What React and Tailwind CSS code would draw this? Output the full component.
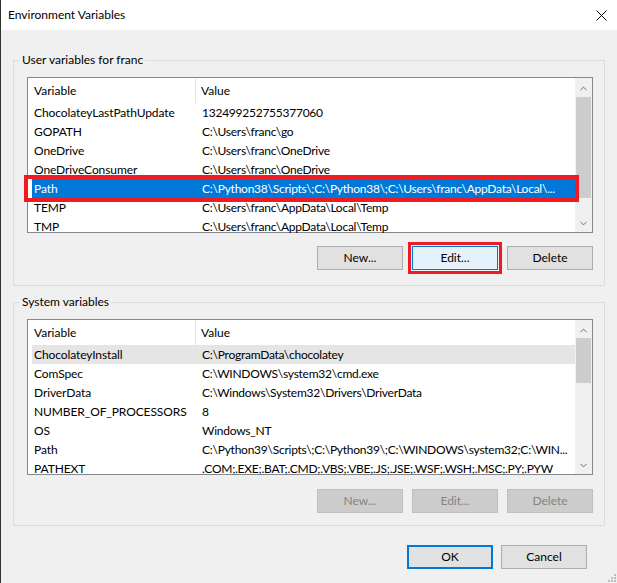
import { ChevronUp, ChevronDown } from 'lucide-react';

const userVars = [
  ['ChocolateyLastPathUpdate', '132499252755377060'],
  ['GOPATH', 'C:\\Users\\franc\\go'],
  ['OneDrive', 'C:\\Users\\franc\\OneDrive'],
  ['OneDriveConsumer', 'C:\\Users\\franc\\OneDrive'],
  ['Path', 'C:\\Python38\\Scripts\\;C:\\Python38\\;C:\\Users\\franc\\AppData\\Local\\...'],
  ['TEMP', 'C:\\Users\\franc\\AppData\\Local\\Temp'],
  ['TMP', 'C:\\Users\\franc\\AppData\\Local\\Temp'],
];

const sysVars = [
  ['ChocolateyInstall', 'C:\\ProgramData\\chocolatey'],
  ['ComSpec', 'C:\\WINDOWS\\system32\\cmd.exe'],
  ['DriverData', 'C:\\Windows\\System32\\Drivers\\DriverData'],
  ['NUMBER_OF_PROCESSORS', '8'],
  ['OS', 'Windows_NT'],
  ['Path', 'C:\\Python39\\Scripts\\;C:\\Python39\\;C:\\WINDOWS\\system32;C:\\WIN...'],
  ['PATHEXT', '.COM;.EXE;.BAT;.CMD;.VBS;.VBE;.JS;.JSE;.WSF;.WSH;.MSC;.PY;.PYW'],
];

const Row = ({ name, value, selected, hover, marked }) => (
  <div
    className={`relative h-[19px] ml-[4px] flex items-center shrink-0 min-w-0 ${
      selected ? 'bg-[#0078d7] text-white' : hover ? 'bg-[#e5e5e5]' : ''
    }`}
  >
    <div className="w-[170px] shrink-0 pl-[2px] whitespace-nowrap overflow-hidden tracking-[-0.1px]">{name}</div>
    <div className="flex-1 min-w-0 whitespace-nowrap overflow-hidden tracking-[-0.25px]">{value}</div>
    {marked && (
      <div className="absolute -left-[8px] -right-[4px] -top-[4px] -bottom-[4px] border-4 border-[#ed1c24]" />
    )}
  </div>
);

const Scrollbar = ({ thumbTop, thumbH }) => (
  <div className="w-[17px] shrink-0 bg-[#f0f0f0] flex flex-col">
    <div className="h-[17px] flex items-center justify-center pt-[3px] text-[#606060]">
      <ChevronUp size={11} strokeWidth={2} />
    </div>
    <div className="flex-1">
      <div className={`mx-[1px] bg-[#cdcdcd] ${thumbTop} ${thumbH}`} />
    </div>
    <div className="h-[17px] flex items-center justify-center text-[#606060]">
      <ChevronDown size={11} strokeWidth={2} />
    </div>
  </div>
);

const VarList = ({ rows, selectedIdx, hoverIdx, thumbTop, thumbH }) => (
  <div className="h-[156px] border border-[#828790] bg-white flex min-w-0">
    <div className="flex-1 min-w-0 flex flex-col">
      <div className="h-[25px] flex items-center shrink-0">
        <div className="w-[168px] h-full pl-[6px] flex items-center border-r border-[#e5e5e5]">Variable</div>
        <div className="pl-[5px]">Value</div>
      </div>
      {rows.map(([n, v], i) => (
        <Row
          key={n}
          name={n}
          value={v}
          selected={i === selectedIdx}
          hover={i === hoverIdx}
          marked={i === selectedIdx}
        />
      ))}
    </div>
    <Scrollbar thumbTop={thumbTop} thumbH={thumbH} />
  </div>
);

const Btn = ({ children, variant = 'normal', marked }) => {
  const styles = {
    normal: 'bg-[#e1e1e1] border border-[#adadad] text-black',
    focus: 'bg-[#e5f1fb] border border-[#0078d7] text-black',
    disabled: 'bg-[#cccccc] border border-[#bfbfbf] text-[#838383]',
    default: 'bg-[#e1e1e1] border-2 border-[#0078d7] text-black',
  };
  return (
    <div
      className={`w-[86px] h-[24px] flex items-center justify-center ${styles[variant]} ${
        marked ? 'outline-[3px] outline-solid outline-offset-[1px] outline-[#ed1c24]' : ''
      }`}
    >
      {children}
    </div>
  );
};

const Group = ({ label, children, pb }) => (
  <fieldset className={`min-w-0 border border-[#dcdcdc] ${pb}`}>
    <legend className="ml-[6px] px-[2px] leading-[16px]">{label}</legend>
    <div className="pl-[13px] pr-[11px] pt-[9px]">{children}</div>
  </fieldset>
);

export default function App() {
  return (
    <div
      className="relative w-[617px] h-[583px] bg-[#f0f0f0] border-l border-[#2e332b] flex flex-col text-[12px] text-black overflow-hidden"
      style={{ fontFamily: 'Lato, "Liberation Sans", Arial, sans-serif' }}
    >
      {/* Title bar */}
      <div className="h-[30px] bg-white flex items-center justify-between pl-[7px] pr-[10px] shrink-0">
        <span>Environment Variables</span>
        <svg width="11" height="11" viewBox="0 0 11 11">
          <path d="M0.5 0.5 L10.5 10.5 M10.5 0.5 L0.5 10.5" stroke="#000" strokeWidth="1" />
        </svg>
      </div>

      <div className="px-[12px] pt-[22px]">
        <Group label="User variables for franc" pb="pb-[15px]">
          <VarList rows={userVars} selectedIdx={4} hoverIdx={-1} thumbTop="mt-[2px]" thumbH="h-[101px]" />
          <div className="flex justify-end gap-[9px] mt-[13px]">
            <Btn>New...</Btn>
            <Btn variant="focus" marked>Edit...</Btn>
            <Btn>Delete</Btn>
          </div>
        </Group>

        <div className="mt-[8px]">
          <Group label="System variables" pb="pb-[12px]">
            <VarList rows={sysVars} selectedIdx={-1} hoverIdx={0} thumbTop="mt-[1px]" thumbH="h-[45px]" />
            <div className="flex justify-end gap-[9px] mt-[14px]">
              <Btn variant="disabled">New...</Btn>
              <Btn variant="disabled">Edit...</Btn>
              <Btn variant="disabled">Delete</Btn>
            </div>
          </Group>
        </div>
      </div>

      <div className="flex justify-end gap-[8px] pr-[30px] mt-[19px]">
        <Btn variant="default">OK</Btn>
        <Btn>Cancel</Btn>
      </div>

      {/* resize grip */}
      <svg className="absolute right-0 bottom-0" width="12" height="12" viewBox="0 0 12 12">
        {[[9, 3], [6, 6], [9, 6], [3, 9], [6, 9], [9, 9]].map(([x, y]) => (
          <rect key={`${x}-${y}`} x={x} y={y} width="2" height="2" fill="#bcbcbc" />
        ))}
      </svg>
    </div>
  );
}
